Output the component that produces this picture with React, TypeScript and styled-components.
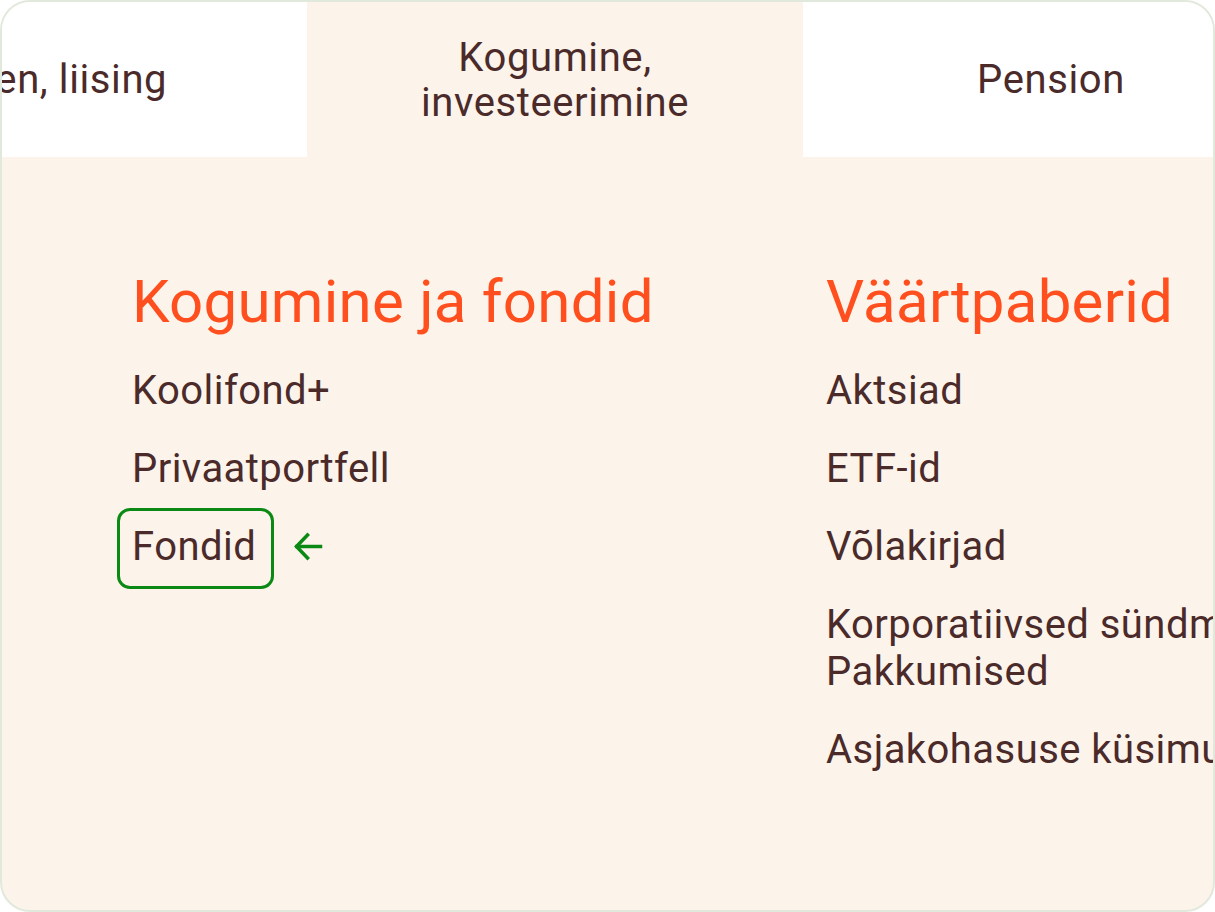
import React from "react";
import styled, { createGlobalStyle } from "styled-components";

const Global = createGlobalStyle`
  html, body { margin: 0; padding: 0; background: #ffffff; }
  body { font-family: Roboto, "Noto Sans", Arial, sans-serif; }
  * { box-sizing: border-box; }
`;

const Frame = styled.div`
  width: 1215px;
  height: 912px;
  border: 2px solid #e1e9dc;
  border-radius: 30px;
  overflow: hidden;
  background: #fcf4ea;
  display: flex;
  flex-direction: column;
`;

const TabRow = styled.div`
  display: flex;
  flex: 0 0 155px;
  margin-left: -191px;
`;

const Tab = styled.div<{ $active?: boolean }>`
  flex: 0 0 496px;
  height: 155px;
  display: flex;
  align-items: center;
  justify-content: center;
  text-align: center;
  background: ${(p) => (p.$active ? "#fcf4ea" : "#ffffff")};
  color: #4b2a2a;
  font-size: 40px;
  line-height: 45px;
  letter-spacing: 0.6px;
  padding: 0 40px;
`;

const Content = styled.div`
  display: flex;
  padding: 110px 0 0 130px;
  overflow: hidden;
`;

const Column = styled.div<{ $width: number }>`
  flex: 0 0 ${(p) => p.$width}px;
  display: flex;
  flex-direction: column;
`;

const Heading = styled.h2`
  margin: 0 0 30px 0;
  font-weight: 400;
  font-size: 60px;
  line-height: 70px;
  letter-spacing: 0.25px;
  color: #ff4f1e;
  white-space: nowrap;
`;

const List = styled.ul`
  list-style: none;
  margin: 0;
  padding: 0;
  display: flex;
  flex-direction: column;
  gap: 31px;
`;

const Item = styled.li`
  display: flex;
  align-items: center;
  gap: 38px;
`;

const Link = styled.a<{ $focused?: boolean }>`
  display: block;
  font-size: 40px;
  line-height: 47px;
  color: #4b2a2a;
  text-decoration: none;
  letter-spacing: 0.45px;
  margin: -15px -18px -19px -15px;
  padding: 12px 15px 16px 12px;
  border: 3px solid ${(p) => (p.$focused ? "#0a8a14" : "transparent")};
  border-radius: 13px;
`;

const Arrow = () => (
  <svg width="29" height="29" viewBox="0 0 29 29" fill="none" stroke="#0a8a14" strokeWidth="3.5" strokeLinecap="square">
    <path d="M26.5 14.5H3" />
    <path d="M13.5 3L2.5 14.5l11 11.5" />
  </svg>
);

export default function App() {
  return (
    <>
      <Global />
      <Frame>
        <TabRow>
          <Tab>Laen, liising</Tab>
          <Tab $active>Kogumine, investeerimine</Tab>
          <Tab>Pension</Tab>
        </TabRow>
        <Content>
          <Column $width={694}>
            <Heading>Kogumine ja fondid</Heading>
            <List>
              <Item><Link href="#">Koolifond+</Link></Item>
              <Item><Link href="#">Privaatportfell</Link></Item>
              <Item>
                <Link href="#" $focused>Fondid</Link>
                <Arrow />
              </Item>
            </List>
          </Column>
          <Column $width={600}>
            <Heading>Väärtpaberid</Heading>
            <List>
              <Item><Link href="#">Aktsiad</Link></Item>
              <Item><Link href="#">ETF-id</Link></Item>
              <Item><Link href="#">Võlakirjad</Link></Item>
              <Item><Link href="#">Korporatiivsed sündmused Pakkumised</Link></Item>
              <Item><Link href="#">Asjakohasuse küsimustik</Link></Item>
            </List>
          </Column>
        </Content>
      </Frame>
    </>
  );
}
